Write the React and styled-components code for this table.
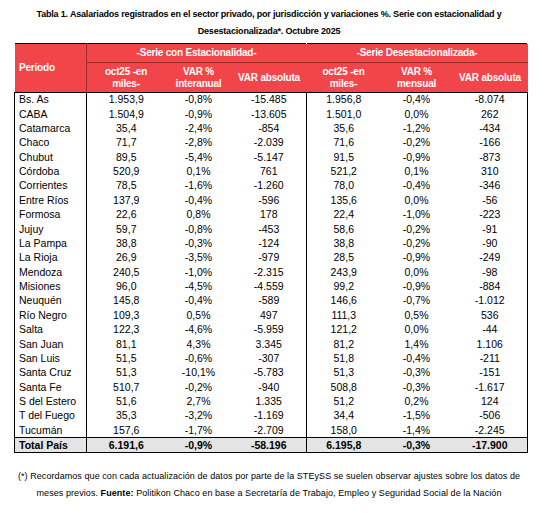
import styled, { createGlobalStyle } from 'styled-components';

const GlobalStyle = createGlobalStyle`
  body {
    margin: 0;
    background: #FFFFFF;
    font-family: "Liberation Sans", Arial, sans-serif;
    color: #000000;
  }
`;

const rows = [
  ['Bs. As', '1.953,9', '-0,8%', '-15.485', '1.956,8', '-0,4%', '-8.074'],
  ['CABA', '1.504,9', '-0,9%', '-13.605', '1.501,0', '0,0%', '262'],
  ['Catamarca', '35,4', '-2,4%', '-854', '35,6', '-1,2%', '-434'],
  ['Chaco', '71,7', '-2,8%', '-2.039', '71,6', '-0,2%', '-166'],
  ['Chubut', '89,5', '-5,4%', '-5.147', '91,5', '-0,9%', '-873'],
  ['Córdoba', '520,9', '0,1%', '761', '521,2', '0,1%', '310'],
  ['Corrientes', '78,5', '-1,6%', '-1.260', '78,0', '-0,4%', '-346'],
  ['Entre Ríos', '137,9', '-0,4%', '-596', '135,6', '0,0%', '-56'],
  ['Formosa', '22,6', '0,8%', '178', '22,4', '-1,0%', '-223'],
  ['Jujuy', '59,7', '-0,8%', '-453', '58,6', '-0,2%', '-91'],
  ['La Pampa', '38,8', '-0,3%', '-124', '38,8', '-0,2%', '-90'],
  ['La Rioja', '26,9', '-3,5%', '-979', '28,5', '-0,9%', '-249'],
  ['Mendoza', '240,5', '-1,0%', '-2.315', '243,9', '0,0%', '-98'],
  ['Misiones', '96,0', '-4,5%', '-4.559', '99,2', '-0,9%', '-884'],
  ['Neuquén', '145,8', '-0,4%', '-589', '146,6', '-0,7%', '-1.012'],
  ['Río Negro', '109,3', '0,5%', '497', '111,3', '0,5%', '536'],
  ['Salta', '122,3', '-4,6%', '-5.959', '121,2', '0,0%', '-44'],
  ['San Juan', '81,1', '4,3%', '3.345', '81,2', '1,4%', '1.106'],
  ['San Luis', '51,5', '-0,6%', '-307', '51,8', '-0,4%', '-211'],
  ['Santa Cruz', '51,3', '-10,1%', '-5.783', '51,3', '-0,3%', '-151'],
  ['Santa Fe', '510,7', '-0,2%', '-940', '508,8', '-0,3%', '-1.617'],
  ['S del Estero', '51,6', '2,7%', '1.335', '51,2', '0,2%', '124'],
  ['T del Fuego', '35,3', '-3,2%', '-1.169', '34,4', '-1,5%', '-506'],
  ['Tucumán', '157,6', '-1,7%', '-2.709', '158,0', '-1,4%', '-2.245'],
];

const total = ['Total País', '6.191,6', '-0,9%', '-58.196', '6.195,8', '-0,3%', '-17.900'];

const colWidths = [72, 79, 66, 75, 74, 72, 75];

const Page = styled.div`
  width: 553px;
  padding-top: 6px;
`;

const Title = styled.h1`
  margin: 0 0 3px;
  text-align: center;
  font-size: 9px;
  letter-spacing: -0.18px;
  font-weight: bold;
  line-height: 17px;
  white-space: nowrap;
  padding-right: 15px;
`;

const Table = styled.table`
  margin-left: 14px;
  width: 513px;
  table-layout: fixed;
  border-collapse: collapse;
  border: 1px solid #000000;
`;

const HeadCell = styled.th`
  background: #F2454A;
  color: #FFFFFF;
  font-size: 10px;
  letter-spacing: -0.2px;
  font-weight: bold;
  line-height: 12px;
  padding: 0;
  text-align: ${(p) => (p.$left ? 'left' : 'center')};
  padding-left: ${(p) => (p.$left ? '4px' : '0')};
  height: ${(p) => p.$h}px;
  border-right: 1px solid ${(p) => (p.$edge ? '#9E2A30' : 'transparent')};
  border-bottom: 1px solid ${(p) => (p.$line ? '#9E2A30' : '#000000')};
  border-left: 1px solid ${(p) => (p.$sep ? '#9E2A30' : 'transparent')};
`;

const Row = styled.tr`
  height: ${(p) => (p.$total ? 15 : 14.375)}px;
  background: ${(p) => (p.$total ? '#E4E4E4' : '#FFFFFF')};
  border-top: ${(p) => (p.$total ? '1px solid #000000' : 'none')};
`;

const Cell = styled.td`
  padding: 0;
  padding-left: ${(p) => (p.$left ? '4px' : '0')};
  font-size: 10.5px;
  line-height: 13px;
  font-weight: ${(p) => (p.$bold ? 'bold' : 'normal')};
  text-align: ${(p) => (p.$left ? 'left' : 'center')};
  border-right: ${(p) => (p.$edge ? '1px solid #000000' : 'none')};
  white-space: nowrap;
`;

const Note = styled.p`
  margin: 15px 0 0;
  text-align: center;
  font-size: 9px;
  letter-spacing: 0.07px;
  line-height: 17px;
  white-space: nowrap;
  padding-right: 15px;
`;

const edges = [0, 3];

const App = () => {
  return (
    <Page>
      <GlobalStyle />
      <Title>
        Tabla 1. Asalariados registrados en el sector privado, por jurisdicción y variaciones %. Serie con estacionalidad y
        <br />
        Desestacionalizada*. Octubre 2025
      </Title>
      <Table>
        <colgroup>
          {colWidths.map((w, i) => (
            <col key={i} style={{ width: w }} />
          ))}
        </colgroup>
        <thead>
          <tr>
            <HeadCell rowSpan={2} $left $edge $h={18}>Período</HeadCell>
            <HeadCell colSpan={3} $h={18} $line>-Serie con Estacionalidad-</HeadCell>
            <HeadCell colSpan={3} $h={18} $line $sep>-Serie Desestacionalizada-</HeadCell>
          </tr>
          <tr>
            <HeadCell $h={29}>oct25 -en<br />miles-</HeadCell>
            <HeadCell $h={29}>VAR %<br />interanual</HeadCell>
            <HeadCell $h={29}>VAR absoluta</HeadCell>
            <HeadCell $h={29} $sep>oct25 -en<br />miles-</HeadCell>
            <HeadCell $h={29}>VAR %<br />mensual</HeadCell>
            <HeadCell $h={29}>VAR absoluta</HeadCell>
          </tr>
        </thead>
        <tbody>
          {[...rows, total].map((r, ri) => {
            const isTotal = ri === rows.length;
            return (
              <Row key={r[0]} $total={isTotal}>
                {r.map((v, ci) => (
                  <Cell key={ci} $left={ci === 0} $edge={edges.includes(ci)} $bold={isTotal}>
                    {v}
                  </Cell>
                ))}
              </Row>
            );
          })}
        </tbody>
      </Table>
      <Note>
        (*) Recordamos que con cada actualización de datos por parte de la STEySS se suelen observar ajustes sobre los datos de
        <br />
        meses previos. <b>Fuente:</b> Politikon Chaco en base a Secretaría de Trabajo, Empleo y Seguridad Social de la Nación
      </Note>
    </Page>
  );
};

export default App;
